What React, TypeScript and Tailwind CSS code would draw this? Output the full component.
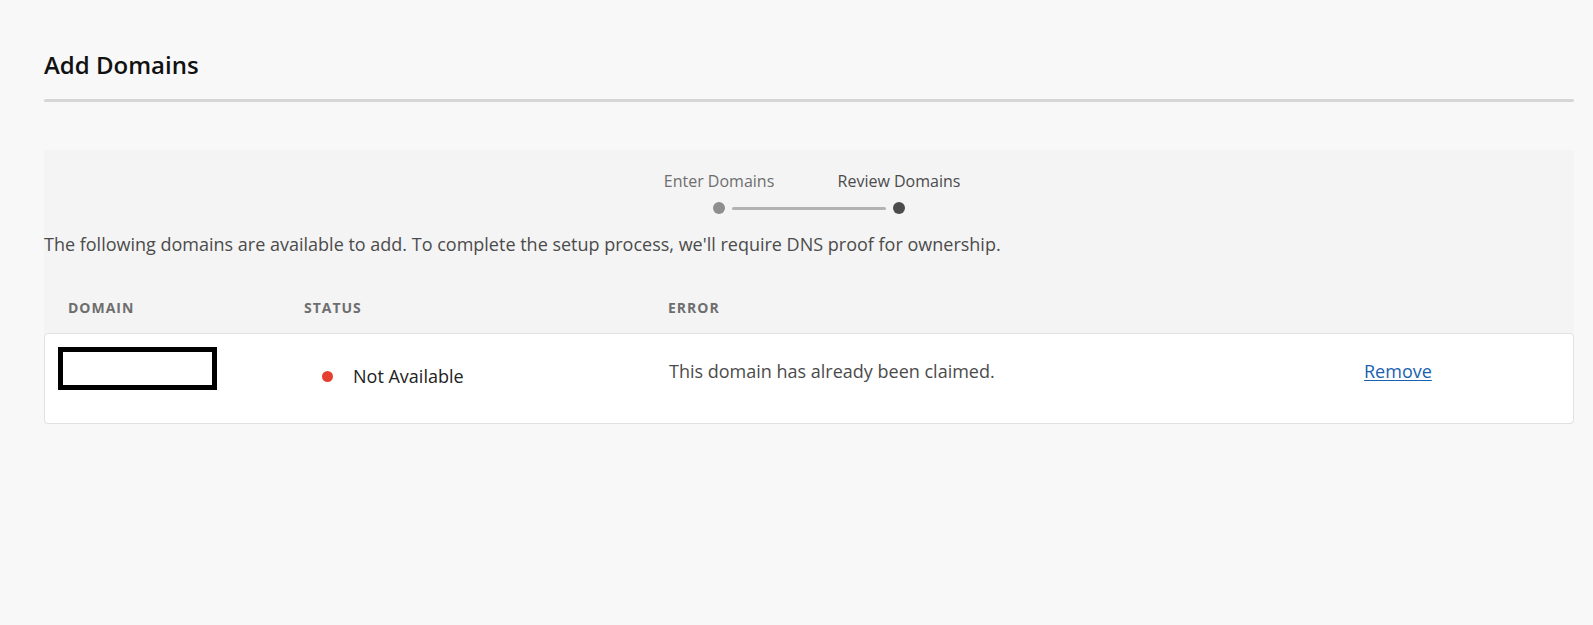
import React from "react";

const columns = "grid grid-cols-[236px_364px_695px_1fr]";

function Stepper() {
  return (
    <div className="flex flex-col items-center pt-[21px]">
      <div className="flex">
        <div className="w-[180px] text-center text-[16px] leading-5 text-[#6e6e6e]">Enter Domains</div>
        <div className="w-[180px] text-center text-[16px] leading-5 text-[#4b4b4b]">Review Domains</div>
      </div>
      <div className="mt-[11px] flex w-[192px] items-center gap-[7px]">
        <span className="h-[12px] w-[12px] rounded-full bg-[#8e8e8e]" />
        <span className="h-[3px] flex-1 rounded-full bg-[#b3b3b3]" />
        <span className="h-[12px] w-[12px] rounded-full bg-[#4b4b4b]" />
      </div>
    </div>
  );
}

export default function App() {
  return (
    <div className="min-h-screen bg-[#f8f8f8] pt-[49px] pl-[44px] pr-[19px] font-['Open_Sans',sans-serif]">
      <h1 className="text-[24px] leading-8 font-semibold text-[#111111]">Add Domains</h1>
      <div className="mt-[18px] h-[3px] rounded-full bg-[#d6d6d6]" />

      <div className="mt-[48px] bg-[#f4f4f4]">
        <Stepper />

        <p className="mt-[18px] text-[18px] leading-6 text-[#4b4b4b]">
          The following domains are available to add. To complete the setup process, we'll require DNS proof for ownership.
        </p>

        <div className={`${columns} mt-[43px] text-[14px] leading-[18px] font-bold tracking-[0.07em] text-[#6e6e6e]`}>
          <div className="pl-6">DOMAIN</div>
          <div className="pl-6">STATUS</div>
          <div className="pl-6">ERROR</div>
          <div />
        </div>

        <div className={`${columns} mt-4 h-[91px] rounded-[4px] border border-[#e1e1e1] bg-white`}>
          <div className="pt-[13px] pl-[13px]">
            <div className="h-[43px] w-[159px] border-[5px] border-black bg-white" />
          </div>
          <div className="flex items-start gap-[20px] pt-[30px] pl-[41px]">
            <span className="mt-[7px] h-[11px] w-[11px] shrink-0 rounded-full bg-[#e5402f]" />
            <span className="text-[18px] leading-6 text-[#222222]">Not Available</span>
          </div>
          <div className="pt-[25px] pl-6 text-[18px] leading-6 text-[#4b4b4b]">
            This domain has already been claimed.
          </div>
          <div className="pt-[25px] pl-6">
            <a href="#" className="text-[18px] leading-6 text-[#1b5fb0] underline underline-offset-2">
              Remove
            </a>
          </div>
        </div>
      </div>
    </div>
  );
}
